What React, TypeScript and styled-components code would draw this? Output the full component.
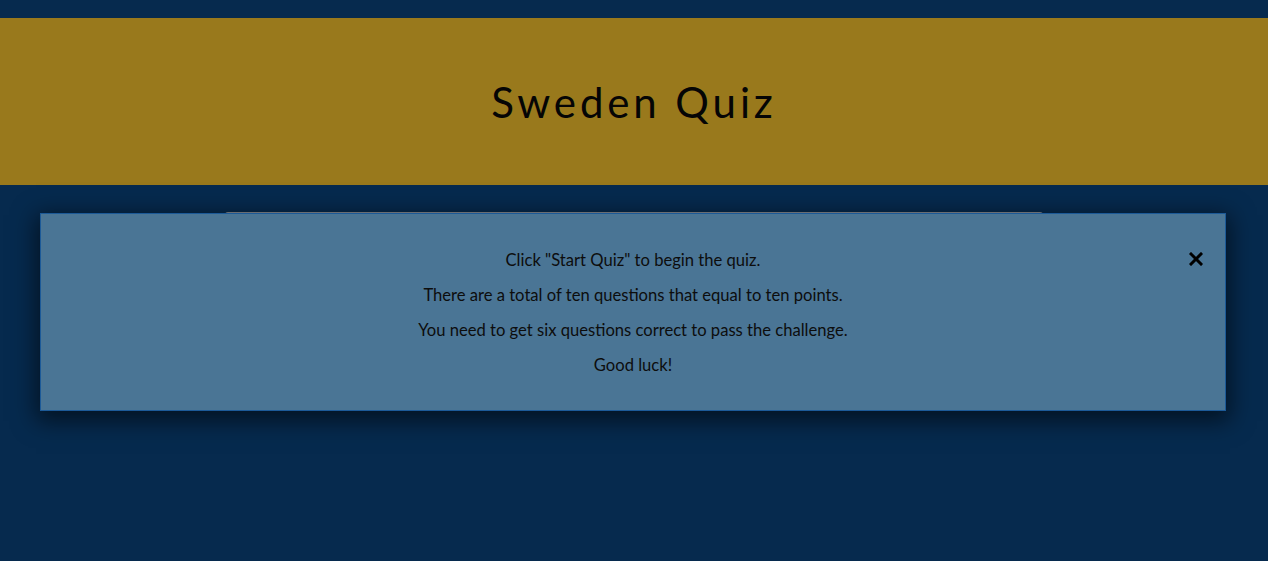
import React from "react";
import styled, { createGlobalStyle } from "styled-components";

const Global = createGlobalStyle`
  html, body {
    margin: 0;
    padding: 0;
    background: #062a4e;
    font-family: Lato, "Open Sans", sans-serif;
  }
  #root { min-height: 561px; }
`;

const Page = styled.div`
  position: relative;
  min-height: 561px;
  padding-top: 18px;
  box-sizing: border-box;
  background: #062a4e;
`;

const Header = styled.header`
  height: 167px;
  background: #99791c;
  display: flex;
  align-items: center;
  justify-content: center;
`;

const Title = styled.h1`
  margin: 0;
  font-family: Lato, sans-serif;
  font-weight: 400;
  font-size: 42px;
  letter-spacing: 3.9px;
  color: #050505;
`;

const Main = styled.main`
  display: flex;
  justify-content: center;
  padding-top: 27px;
`;

const Card = styled.section`
  width: 818px;
  height: 300px;
  margin-left: -1px;
  border-top: 1px solid #8a8f96;
  border-radius: 3px 3px 0 0;
`;

const Modal = styled.div`
  position: absolute;
  top: 213px;
  left: 40px;
  width: 1186px;
  box-sizing: border-box;
  background: #4a7595;
  border: 1px solid #1c5a98;
  box-shadow: 0 6px 22px 4px rgba(0, 0, 0, 0.55);
  padding: 21px 20px 19px;
  text-align: center;
`;

const Text = styled.p`
  margin: 16px 0;
  font-size: 16.6px;
  line-height: 19px;
  color: #0d0d0d;
`;

const Close = styled.button`
  position: absolute;
  top: 38px;
  right: 22px;
  width: 14px;
  height: 14px;
  padding: 0;
  border: 0;
  background: none;
  cursor: pointer;
  display: flex;
`;

export default function App() {
  return (
    <>
      <Global />
      <Page>
        <Header>
          <Title>Sweden Quiz</Title>
        </Header>
        <Main>
          <Card />
        </Main>
        <Modal>
          <Close aria-label="Close">
            <svg width="14" height="14" viewBox="0 0 14 14">
              <path d="M2 2 L12 12 M12 2 L2 12" stroke="#000" strokeWidth="3" strokeLinecap="square" />
            </svg>
          </Close>
          <Text>Click "Start Quiz" to begin the quiz.</Text>
          <Text>There are a total of ten questions that equal to ten points.</Text>
          <Text>You need to get six questions correct to pass the challenge.</Text>
          <Text>Good luck!</Text>
        </Modal>
      </Page>
    </>
  );
}
